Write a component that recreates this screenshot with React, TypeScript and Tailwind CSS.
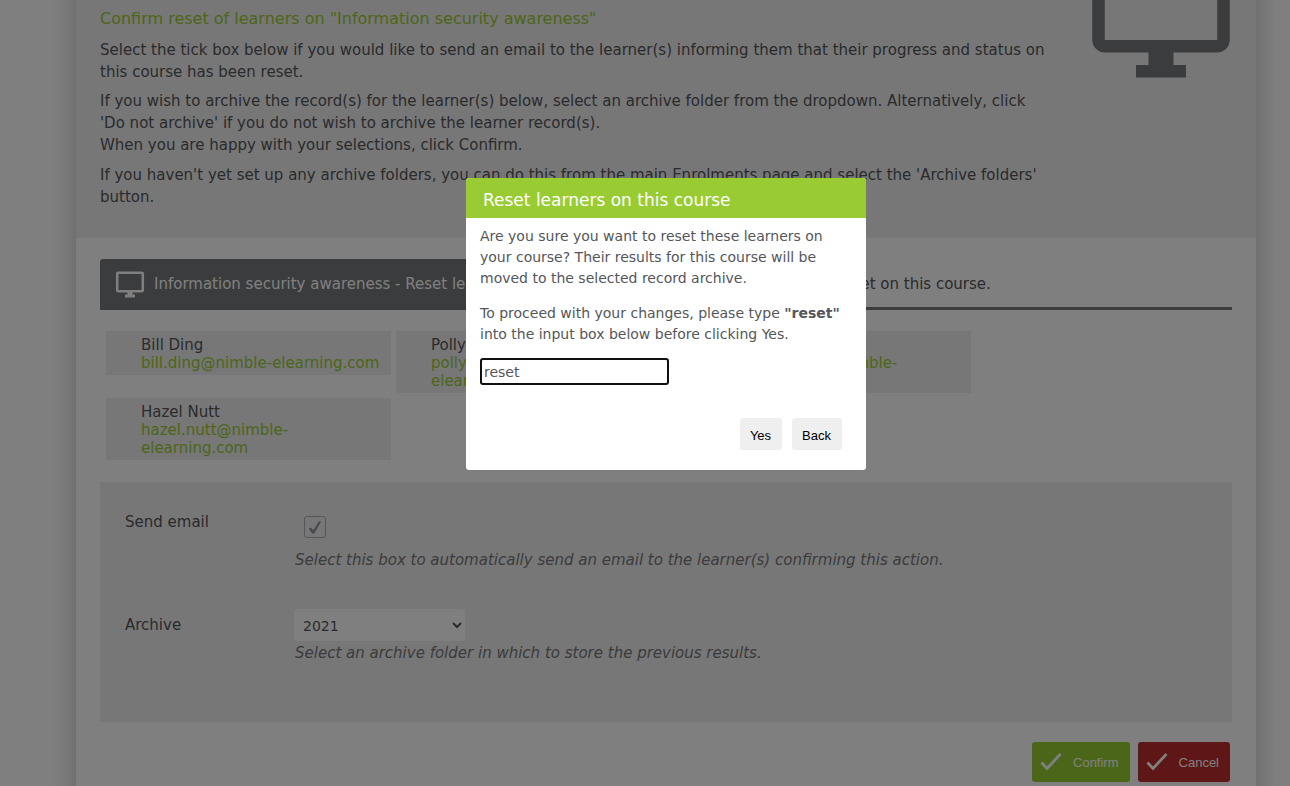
import React from 'react';

const learners = [
  { name: 'Bill Ding', email: 'bill.ding@nimble-elearning.com' },
  { name: 'Polly Ester', email: 'polly.ester@nimble-elearning.com' },
  { name: 'Theresa Green', email: 'theresa.green@nimble-elearning.com' },
  { name: 'Hazel Nutt', email: 'hazel.nutt@nimble-elearning.com' },
];

const MONITOR =
  'M21 2H3c-1.1 0-2 .9-2 2v12c0 1.1.9 2 2 2h7v2H8v2h8v-2h-2v-2h7c1.1 0 2-.9 2-2V4c0-1.1-.9-2-2-2zm0 14H3V4h18v12z';

function SmallMonitor() {
  return (
    <svg viewBox="0 0 30 28" className="h-7 w-[30px] shrink-0" fill="none" aria-hidden="true">
      <rect x="2.2" y="1.7" width="25.6" height="18.6" rx="1" stroke="#fff" strokeWidth="2.5" />
      <path d="M12.500 21h5v2.500h2.500v3H10v-3h2.500z" fill="#fff" />
    </svg>
  );
}

function ActionButton({ label, className }: { label: string; className: string }) {
  return (
    <button type="button" className={`flex h-10 items-center gap-[11px] rounded-[3px] pl-2 pr-[11px] font-['Liberation_Sans',Arial,sans-serif] text-[13px] text-white ${className}`}>
      <svg viewBox="0 0 22 20" className="h-5 w-[22px]" fill="none" stroke="#fff" strokeWidth="2.8" aria-hidden="true">
        <path d="M1.500 10.500l5.500 6L20.500 2" />
      </svg>
      <span className="pt-px">{label}</span>
    </button>
  );
}

export default function App() {
  return (
    <div className="relative h-screen overflow-hidden bg-white pl-[42px] font-['DejaVu_Sans',Verdana,sans-serif] text-[15px] text-[#54565a]">
      <div className="mx-auto -my-8 max-w-[1180px] bg-white py-8 shadow-[0_0_24px_rgba(0,0,0,0.25)]">
        <header className="flex justify-between bg-[#eeeeee] pb-[30px] pl-6 pr-5">
          <div className="max-w-[955px] pt-2 leading-[22px]">
            <h1 className="text-[16px] text-[#99cc33]">Confirm reset of learners on "Information security awareness"</h1>
            <p className="mt-[9px]">
              Select the tick box below if you would like to send an email to the learner(s) informing them that their progress and status on this course has been reset.
            </p>
            <p className="mt-[7px]">
              If you wish to archive the record(s) for the learner(s) below, select an archive folder from the dropdown. Alternatively, click 'Do&nbsp;not archive' if you do not wish to archive the learner record(s).
              <br />
              When you are happy with your selections, click Confirm.
            </p>
            <p className="mt-2">
              If you haven't yet set up any archive folders, you can do this from the main Enrolments page and select the 'Archive folders' button.
            </p>
          </div>
          <svg viewBox="0 9.6 24 14.4" className="h-[90px] w-[150px] shrink-0" fill="#77787a" aria-hidden="true">
            <path d={MONITOR} />
          </svg>
        </header>

        <main className="px-6 pt-[21px]">
          <div className="flex h-[51px] items-stretch border-b-[3px] border-[#77787a]">
            <h2 className="-mb-[3px] flex items-center gap-[9px] rounded-tl-[3px] bg-[#77787a] pl-[15px] pr-8 text-white">
              <SmallMonitor />
              Information security awareness - Reset learners
            </h2>
            <p className="flex flex-1 items-center pl-[46px] pt-[2px]">The learners listed below will be reset on this course.</p>
          </div>

          <ul className="mt-[21px] grid grid-cols-[repeat(3,285px)] items-start gap-[5px] pl-[6px] leading-[18px]">
            {learners.map((l) => (
              <li key={l.email} className="bg-[#eeeeee] pb-[3px] pl-[35px] pr-2 pt-[5px]">
                {l.name}
                <br />
                <a href={`mailto:${l.email}`} className="text-[#99cc33]">{l.email}</a>
              </li>
            ))}
          </ul>

          <form className="mt-[22px] h-[240px] bg-[#eeeeee] px-[25px] pt-[29px] leading-[22px]">
            <div className="flex">
              <label htmlFor="send-email" className="w-[169px]">Send email</label>
              <div>
                <div className="relative ml-[10px] mt-[5px] h-[22px] w-[22px]">
                  <input id="send-email" type="checkbox" defaultChecked className="peer block h-[22px] w-[22px] appearance-none rounded-[3px] border border-[#a5afb8]" />
                  <svg viewBox="0 0 22 22" className="pointer-events-none absolute inset-0 hidden peer-checked:block" fill="#8e9298" aria-hidden="true">
                    <path d="M4.800 12.800L6.800 11.600 9.200 14.200 15 5.200 17 5.800 10.200 17.600 8.400 17.800z" />
                  </svg>
                </div>
                <p className="mt-[11px] pl-px italic text-[#77787a]">Select this box to automatically send an email to the learner(s) confirming this action.</p>
              </div>
            </div>
            <div className="mt-[38px] flex">
              <label htmlFor="archive" className="w-[169px] pt-[5px]">Archive</label>
              <div>
                <select id="archive" className="block h-8 w-[171px] rounded-[3px] bg-white pl-[5px] pt-[2px] text-[14px]" defaultValue="2021">
                  <option>2021</option>
                </select>
                <p className="mt-px pl-px italic text-[#77787a]">Select an archive folder in which to store the previous results.</p>
              </div>
            </div>
          </form>

          <div className="mt-5 flex justify-end gap-2 pr-[2px]">
            <ActionButton label="Confirm" className="bg-[#99cc33]" />
            <ActionButton label="Cancel" className="bg-[#bd2d2d]" />
          </div>
        </main>
      </div>

      <div className="absolute inset-0 flex items-start justify-center bg-black/50 pl-[42px] pt-[178px]">
        <section role="dialog" aria-modal="true" aria-labelledby="dialog-title" className="w-[400px] overflow-hidden rounded-[3px] bg-white text-[14px] leading-[21px]">
          <h2 id="dialog-title" className="bg-[#99cc33] px-[17px] pb-[7px] pt-3 text-[17px] text-white">Reset learners on this course</h2>
          <div className="px-[14px] pb-5 pt-2">
            <p>Are you sure you want to reset these learners on your course? Their results for this course will be moved to the selected record archive.</p>
            <p className="mt-[14px]">
              <label htmlFor="confirm-text">To proceed with your changes, please type <b>"reset"</b> into the input box below before clicking Yes.</label>
            </p>
            <input id="confirm-text" type="text" defaultValue="reset" className="mt-[13px] block h-[27px] w-[189px] rounded-[3px] border-2 border-[#101010] px-[2px] outline-none" />
            <div className="mt-[33px] flex justify-end gap-[10px] pr-[10px] font-['Liberation_Sans',Arial,sans-serif] text-[13px] text-black">
              <button type="button" className="h-8 rounded-[3px] bg-[#efefef] pl-[10px] pr-[11px] pt-[2px]">Yes</button>
              <button type="button" className="h-8 rounded-[3px] bg-[#efefef] pl-[10px] pr-[11px] pt-[2px]">Back</button>
            </div>
          </div>
        </section>
      </div>
    </div>
  );
}
